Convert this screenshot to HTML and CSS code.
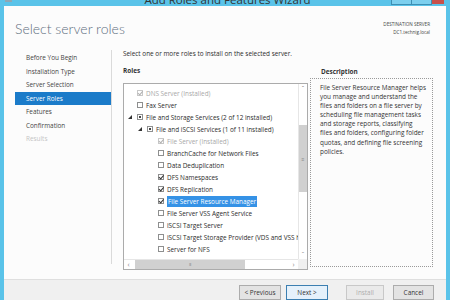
FILE: index.html
```html
<!DOCTYPE html>
<html lang="en">
<head>
    <meta charset="UTF-8">
    <title>Add Roles and Features Wizard</title>
    <link rel="stylesheet" href="styles.css">
</head>
<body>

<div class="window">
    <div class="titlebar">
        <span class="app-icon"></span>
        <div class="wintitle">Add Roles and Features Wizard</div>
        <div class="wincontrols">
            <span class="btn-min"></span>
            <span class="btn-max"></span>
            <span class="btn-close"></span>
        </div>
    </div>

    <div class="client">
        <header class="wiz-head">
            <h1>Select server roles</h1>
            <div class="dest">
                <div>DESTINATION SERVER</div>
                <div>DC1.technig.local</div>
            </div>
        </header>

        <div class="wiz-body">
            <nav class="steps">
                <div class="step">Before You Begin</div>
                <div class="step">Installation Type</div>
                <div class="step">Server Selection</div>
                <div class="step active">Server Roles</div>
                <div class="step">Features</div>
                <div class="step">Confirmation</div>
                <div class="step disabled">Results</div>
            </nav>

            <section class="page">
                <p class="intro">Select one or more roles to install on the selected server.</p>

                <div class="columns">
                    <div class="roles">
                        <h3>Roles</h3>
                        <div class="listbox">
                            <div class="tree">
                                <div class="row installed"><span class="exp"></span><span class="cb checked"></span>DNS Server (Installed)</div>
                                <div class="row"><span class="exp"></span><span class="cb"></span>Fax Server</div>
                                <div class="row"><span class="exp open"></span><span class="cb partial"></span>File and Storage Services (2 of 12 installed)</div>
                                <div class="row lvl1"><span class="exp open"></span><span class="cb partial"></span>File and iSCSI Services (1 of 11 installed)</div>
                                <div class="row lvl2 installed"><span class="exp"></span><span class="cb checked"></span>File Server (Installed)</div>
                                <div class="row lvl2"><span class="exp"></span><span class="cb"></span>BranchCache for Network Files</div>
                                <div class="row lvl2"><span class="exp"></span><span class="cb"></span>Data Deduplication</div>
                                <div class="row lvl2"><span class="exp"></span><span class="cb checked"></span>DFS Namespaces</div>
                                <div class="row lvl2"><span class="exp"></span><span class="cb checked"></span>DFS Replication</div>
                                <div class="row lvl2"><span class="exp"></span><span class="cb checked"></span><span class="selected">File Server Resource Manager</span></div>
                                <div class="row lvl2"><span class="exp"></span><span class="cb"></span>File Server VSS Agent Service</div>
                                <div class="row lvl2"><span class="exp"></span><span class="cb"></span>iSCSI Target Server</div>
                                <div class="row lvl2"><span class="exp"></span><span class="cb"></span>iSCSI Target Storage Provider (VDS and VSS hardware providers)</div>
                                <div class="row lvl2"><span class="exp"></span><span class="cb"></span>Server for NFS</div>
                            </div>

                            <div class="vscroll">
                                <div class="sb-btn">&#710;</div>
                                <div class="sb-gap-top"></div>
                                <div class="sb-thumb">&#8801;</div>
                                <div class="sb-gap"></div>
                                <div class="sb-btn">&#711;</div>
                            </div>

                            <div class="hscroll">
                                <div class="sb-btn">&lsaquo;</div>
                                <div class="sb-gap-left"></div>
                                <div class="sb-thumb">III</div>
                                <div class="sb-gap"></div>
                                <div class="sb-btn">&rsaquo;</div>
                            </div>

                            <div class="corner"></div>
                        </div>
                    </div>

                    <div class="desc">
                        <h3>Description</h3>
                        <div class="desc-box">
                            File Server Resource Manager helps you manage and understand the files and folders on a file server by scheduling file management tasks and storage reports, classifying files and folders, configuring folder quotas, and defining file screening policies.
                        </div>
                    </div>
                </div>
            </section>
        </div>

        <footer class="wiz-foot">
            <button type="button" class="prev">&lt; Previous</button>
            <button type="button" class="next">Next &gt;</button>
            <button type="button" class="install" disabled>Install</button>
            <button type="button" class="cancel">Cancel</button>
        </footer>
    </div>
</div>

</body>
</html>
```

FILE: styles.css
```css
body {
    margin: 0;
    padding: 0;
    width: 450px;
    height: 300px;
    overflow: hidden;
    background: #5ac3e9;
    font-family: 'Open Sans', 'Noto Sans', sans-serif;
    color: #2b2b2b;
}

.window {
    width: 450px;
    height: 300px;
    display: flex;
    flex-direction: column;
}

/* title bar */

.titlebar {
    height: 8px;
    display: flex;
    align-items: flex-start;
    overflow: hidden;
    background: #5ac3e9;
}

.app-icon {
    width: 7px;
    height: 2px;
    margin-left: 5px;
    background: #8fa6b4;
}

.wintitle {
    flex: 1;
    text-align: center;
    font-size: 11.5px;
    line-height: 11px;
    margin-top: -6px;
    color: #333;
    padding-left: 52px;
    white-space: nowrap;
}

.wincontrols {
    display: flex;
    margin-right: 6px;
}

.wincontrols span {
    height: 4px;
    display: block;
}

.btn-min,
.btn-max {
    width: 19px;
    background: #7ccfee;
    border: 1px solid #3d8fb3;
    border-top: none;
    margin-right: -1px;
}

.btn-close {
    width: 12px;
    background: #c8504b;
    margin-left: 1px;
}

/* client area */

.client {
    flex: 1;
    margin: 0 4px;
    background: #fcfcfc;
    display: flex;
    flex-direction: column;
}

.wiz-head {
    height: 42px;
    display: flex;
    justify-content: space-between;
    align-items: flex-start;
}

.wiz-head h1 {
    margin: 0;
    padding: 14px 0 0 11px;
    font-family: Lato, 'Open Sans', sans-serif;
    font-size: 14px;
    line-height: 17px;
    font-weight: 300;
    color: #5f6f7f;
}

.dest {
    padding: 14px 16px 0 0;
    text-align: right;
    font-size: 4.6px;
    line-height: 8px;
    color: #444;
}

.wiz-body {
    height: 231px;
    display: flex;
}

/* steps */

.steps {
    width: 108px;
    height: 214px;
    margin-top: 2px;
    padding-top: 1px;
    border-right: 1px solid #dadada;
    box-sizing: border-box;
}

.step {
    margin-left: 11px;
    padding-left: 11px;
    font-size: 6.4px;
    line-height: 13.5px;
    color: #444;
}

.step.active {
    background: #1b7bc9;
    color: #fff;
}

.step.disabled {
    color: #c4c4c4;
}

/* page */

.page {
    flex: 1;
    padding: 1px 0 0 11px;
    font-size: 6.4px;
}

.intro {
    margin: 0;
    line-height: 9px;
}

.columns {
    display: grid;
    grid-template-columns: 185px 123px;
    column-gap: 2px;
    margin-top: 6px;
}

.roles h3,
.desc h3 {
    margin: 0;
    font-size: 6.4px;
    font-weight: 700;
    line-height: 9px;
    color: #333;
}

.roles h3 {
    margin-bottom: 8px;
    margin-top: 2px;
}

.desc h3 {
    margin-left: 11px;
    margin-top: 3px;
    margin-bottom: 2px;
}

/* roles list */

.listbox {
    width: 185px;
    height: 187px;
    box-sizing: border-box;
    border: 1px solid #ababab;
    background: #fff;
    display: grid;
    grid-template-columns: 1fr 9px;
    grid-template-rows: 1fr 10px;
}

.tree {
    padding-top: 3px;
    overflow: hidden;
    white-space: nowrap;
}

.row {
    height: 12px;
    display: flex;
    align-items: center;
    padding-left: 3px;
    color: #2b2b2b;
}

.row.lvl1 {
    padding-left: 13px;
}

.row.lvl2 {
    padding-left: 24px;
}

.row.installed {
    color: #a8a8a8;
}

.exp {
    width: 10px;
    height: 6px;
    flex: none;
    position: relative;
}

.exp.open::after {
    content: "";
    position: absolute;
    left: 1px;
    top: 1px;
    border-style: solid;
    border-width: 0 0 4px 4px;
    border-color: transparent transparent #333 transparent;
}

.cb {
    width: 6px;
    height: 6px;
    flex: none;
    box-sizing: border-box;
    border: 1px solid #8e8f8f;
    background: #fff;
    margin-right: 3px;
    position: relative;
}

.cb.checked::after {
    content: "";
    position: absolute;
    left: 1px;
    top: -1px;
    width: 1.5px;
    height: 3.5px;
    border: solid #333;
    border-width: 0 1px 1px 0;
    transform: rotate(40deg);
}

.cb.partial::after {
    content: "";
    position: absolute;
    left: 1px;
    top: 1px;
    width: 2px;
    height: 2px;
    background: #444;
}

.installed .cb {
    border-color: #c8c8c8;
}

.installed .cb.checked::after {
    border-color: #b0b0b0;
}

.selected {
    background: #3592e6;
    color: #fff;
    padding: 1px 1px;
}

/* scrollbars */

.vscroll {
    display: flex;
    flex-direction: column;
    background: #fff;
    border-left: 1px solid #e6e6e6;
}

.hscroll {
    display: flex;
    background: #fff;
    border-top: 1px solid #e6e6e6;
}

.sb-btn {
    flex: none;
    width: 9px;
    height: 9px;
    font-size: 7px;
    line-height: 9px;
    text-align: center;
    color: #888;
}

.vscroll .sb-btn {
    width: auto;
}

.sb-gap-top {
    height: 32px;
}

.sb-gap-left {
    width: 2px;
}

.sb-gap {
    flex: 1;
}

.sb-thumb {
    background: #d0d0d0;
    color: #888;
    font-size: 5px;
    display: flex;
    align-items: center;
    justify-content: center;
}

.vscroll .sb-thumb {
    height: 67px;
}

.hscroll .sb-thumb {
    width: 110px;
    font-size: 4px;
    letter-spacing: -0.5px;
}

.corner {
    background: #f0f0f0;
}

/* description */

.desc-box {
    height: 189px;
    box-sizing: border-box;
    border: 1px dotted #9a9a9a;
    padding: 4px 6px 0 9px;
    font-size: 6.4px;
    line-height: 9.1px;
    color: #333;
}

/* footer */

.wiz-foot {
    flex: 1;
    border-top: 1px solid #dfdfdf;
    background: #f0f0f0;
    display: flex;
    justify-content: flex-end;
    align-items: flex-start;
    padding: 5px 12px 0 0;
}

.wiz-foot button {
    height: 15px;
    padding: 0;
    font-family: inherit;
    font-size: 6.4px;
    color: #333;
    background: #e3e3e3;
    border: 1px solid #acacac;
    border-radius: 0;
}

.prev {
    width: 42px;
    margin-right: 5px;
}

.next {
    width: 42px;
    margin-right: 18px;
    border-color: #3c7fb1 !important;
    background: #e5f1fb !important;
}

.install {
    width: 38px;
    margin-right: 9px;
    color: #adadad !important;
    border-color: #c8c8c8 !important;
    background: #eaeaea !important;
}

.cancel {
    width: 41px;
}
```
